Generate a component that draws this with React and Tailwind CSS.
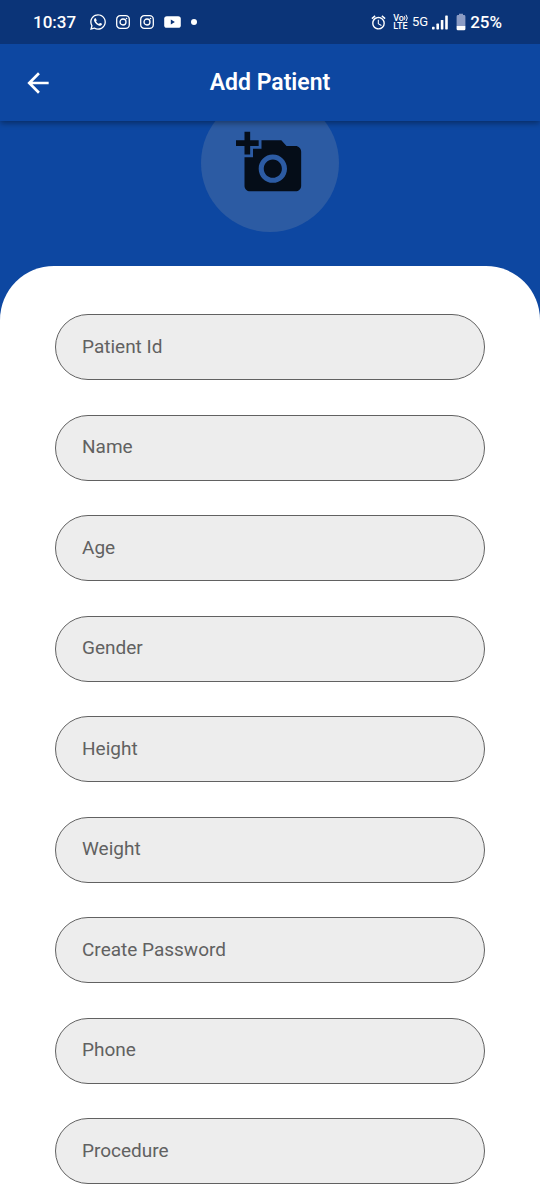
import { MdAddAPhoto, MdAlarm, MdArrowBack } from "react-icons/md";
import { FaWhatsapp } from "react-icons/fa";

const FIELDS = [
  { name: "patientId", label: "Patient Id", type: "text" },
  { name: "name", label: "Name", type: "text" },
  { name: "age", label: "Age", type: "text" },
  { name: "gender", label: "Gender", type: "text" },
  { name: "height", label: "Height", type: "text" },
  { name: "weight", label: "Weight", type: "text" },
  { name: "password", label: "Create Password", type: "password" },
  { name: "phone", label: "Phone", type: "tel" },
  { name: "procedure", label: "Procedure", type: "text" },
];

function InstagramIcon() {
  return (
    <svg viewBox="0 0 14 14" className="size-[14px]" fill="none" stroke="currentColor" strokeWidth="1.3" aria-hidden="true">
      <rect x="0.7" y="0.7" width="12.6" height="12.6" rx="3.6" />
      <circle cx="7" cy="7" r="3" />
      <circle cx="10.5" cy="3.5" r="0.8" fill="currentColor" stroke="none" />
    </svg>
  );
}

function YoutubeIcon() {
  return (
    <svg viewBox="0 0 17 12" className="h-3 w-[17px]" aria-hidden="true">
      <rect x="0.2" y="0.2" width="16.6" height="11.6" rx="2.6" fill="#fff" />
      <path d="M6.8 3.6v4.8L10.9 6z" fill="#0b3478" />
    </svg>
  );
}

function SignalIcon() {
  return (
    <svg viewBox="0 0 16 15" className="h-[15px] w-4" fill="currentColor" aria-hidden="true">
      <rect x="0" y="11.8" width="2.6" height="2.6" rx="0.6" />
      <rect x="4.4" y="8.6" width="2.6" height="5.8" rx="0.6" />
      <rect x="8.8" y="5" width="2.6" height="9.4" rx="0.6" />
      <rect x="13.2" y="0.5" width="2.6" height="13.9" rx="0.6" />
    </svg>
  );
}

function BatteryIcon() {
  return (
    <svg viewBox="0 0 10 18" className="h-[18px] w-[10px]" aria-hidden="true">
      <path d="M3 0.8h4v1.3h1A1.4 1.4 0 0 1 9.4 3.5V13H0.6V3.5A1.4 1.4 0 0 1 2 2.1h1z" fill="#8c9cc4" />
      <path d="M0.6 13h8.8v3A1.3 1.3 0 0 1 8.1 17.3H1.9A1.3 1.3 0 0 1 0.6 16z" fill="#fff" />
    </svg>
  );
}

function VolteBadge() {
  return (
    <span className="flex flex-col text-[9px] leading-[8px] font-medium">
      <span className="flex items-center">
        Vo
        <svg viewBox="0 0 4 8" className="h-2 w-1" fill="none" stroke="currentColor" strokeWidth="1" aria-hidden="true">
          <path d="M0.3 2.2q1.4 1.8 0 3.6M2 0.8q2.6 3.2 0 6.4" />
        </svg>
      </span>
      <span>LTE</span>
    </span>
  );
}

function StatusBar() {
  return (
    <div className="flex h-11 items-center justify-between bg-[#0b3478] pr-[38px] pl-[33px] text-white">
      <div className="flex items-center gap-[10px]">
        <span className="mr-1 text-[17px] leading-5 font-medium">10:37</span>
        <FaWhatsapp className="h-[18px] w-4" />
        <InstagramIcon />
        <InstagramIcon />
        <YoutubeIcon />
        <span className="size-[6px] rounded-full bg-white" />
      </div>
      <div className="flex items-center gap-1">
        <MdAlarm className="mr-[2px] size-[17px]" />
        <VolteBadge />
        <span className="text-[13px] leading-4">5G</span>
        <SignalIcon />
        <span className="ml-1"><BatteryIcon /></span>
        <span className="text-[17px] leading-5 font-medium">25%</span>
      </div>
    </div>
  );
}

export default function App() {
  return (
    <div className="flex min-h-screen flex-col bg-[#0d47a1] font-['Roboto',sans-serif]">
      <header className="z-10 bg-[#0d47a1] shadow-[0_2px_6px_rgba(0,0,0,0.4)]">
        <StatusBar />
        <div className="grid h-[77px] grid-cols-[1fr_auto_1fr] items-center px-[22px] text-white">
          <button type="button" aria-label="Back" className="size-8 justify-self-start">
            <MdArrowBack className="size-8" />
          </button>
          <h1 className="text-[23px] leading-[33px] font-semibold">Add Patient</h1>
        </div>
      </header>
      <main className="-mt-7 flex flex-1 flex-col">
        <div className="flex justify-center pt-px pb-[34px]">
          <button
            type="button"
            aria-label="Add photo"
            className="flex size-[138px] items-center justify-center rounded-full bg-[#2c5ba3] text-[#050d18]"
          >
            <MdAddAPhoto className="size-[68px]" />
          </button>
        </div>
        <form className="flex flex-1 flex-col justify-between gap-4 rounded-t-[54px] bg-white px-[55px] pt-12 pb-4">
          {FIELDS.map((field) => (
            <input
              key={field.name}
              name={field.name}
              type={field.type}
              aria-label={field.label}
              placeholder={field.label}
              className="h-[66px] w-full rounded-full border border-[#616161] bg-[#ededed] px-[26px] pb-[2px] text-[19px] text-[#212121] outline-none placeholder:text-[#616161]"
            />
          ))}
        </form>
      </main>
    </div>
  );
}
